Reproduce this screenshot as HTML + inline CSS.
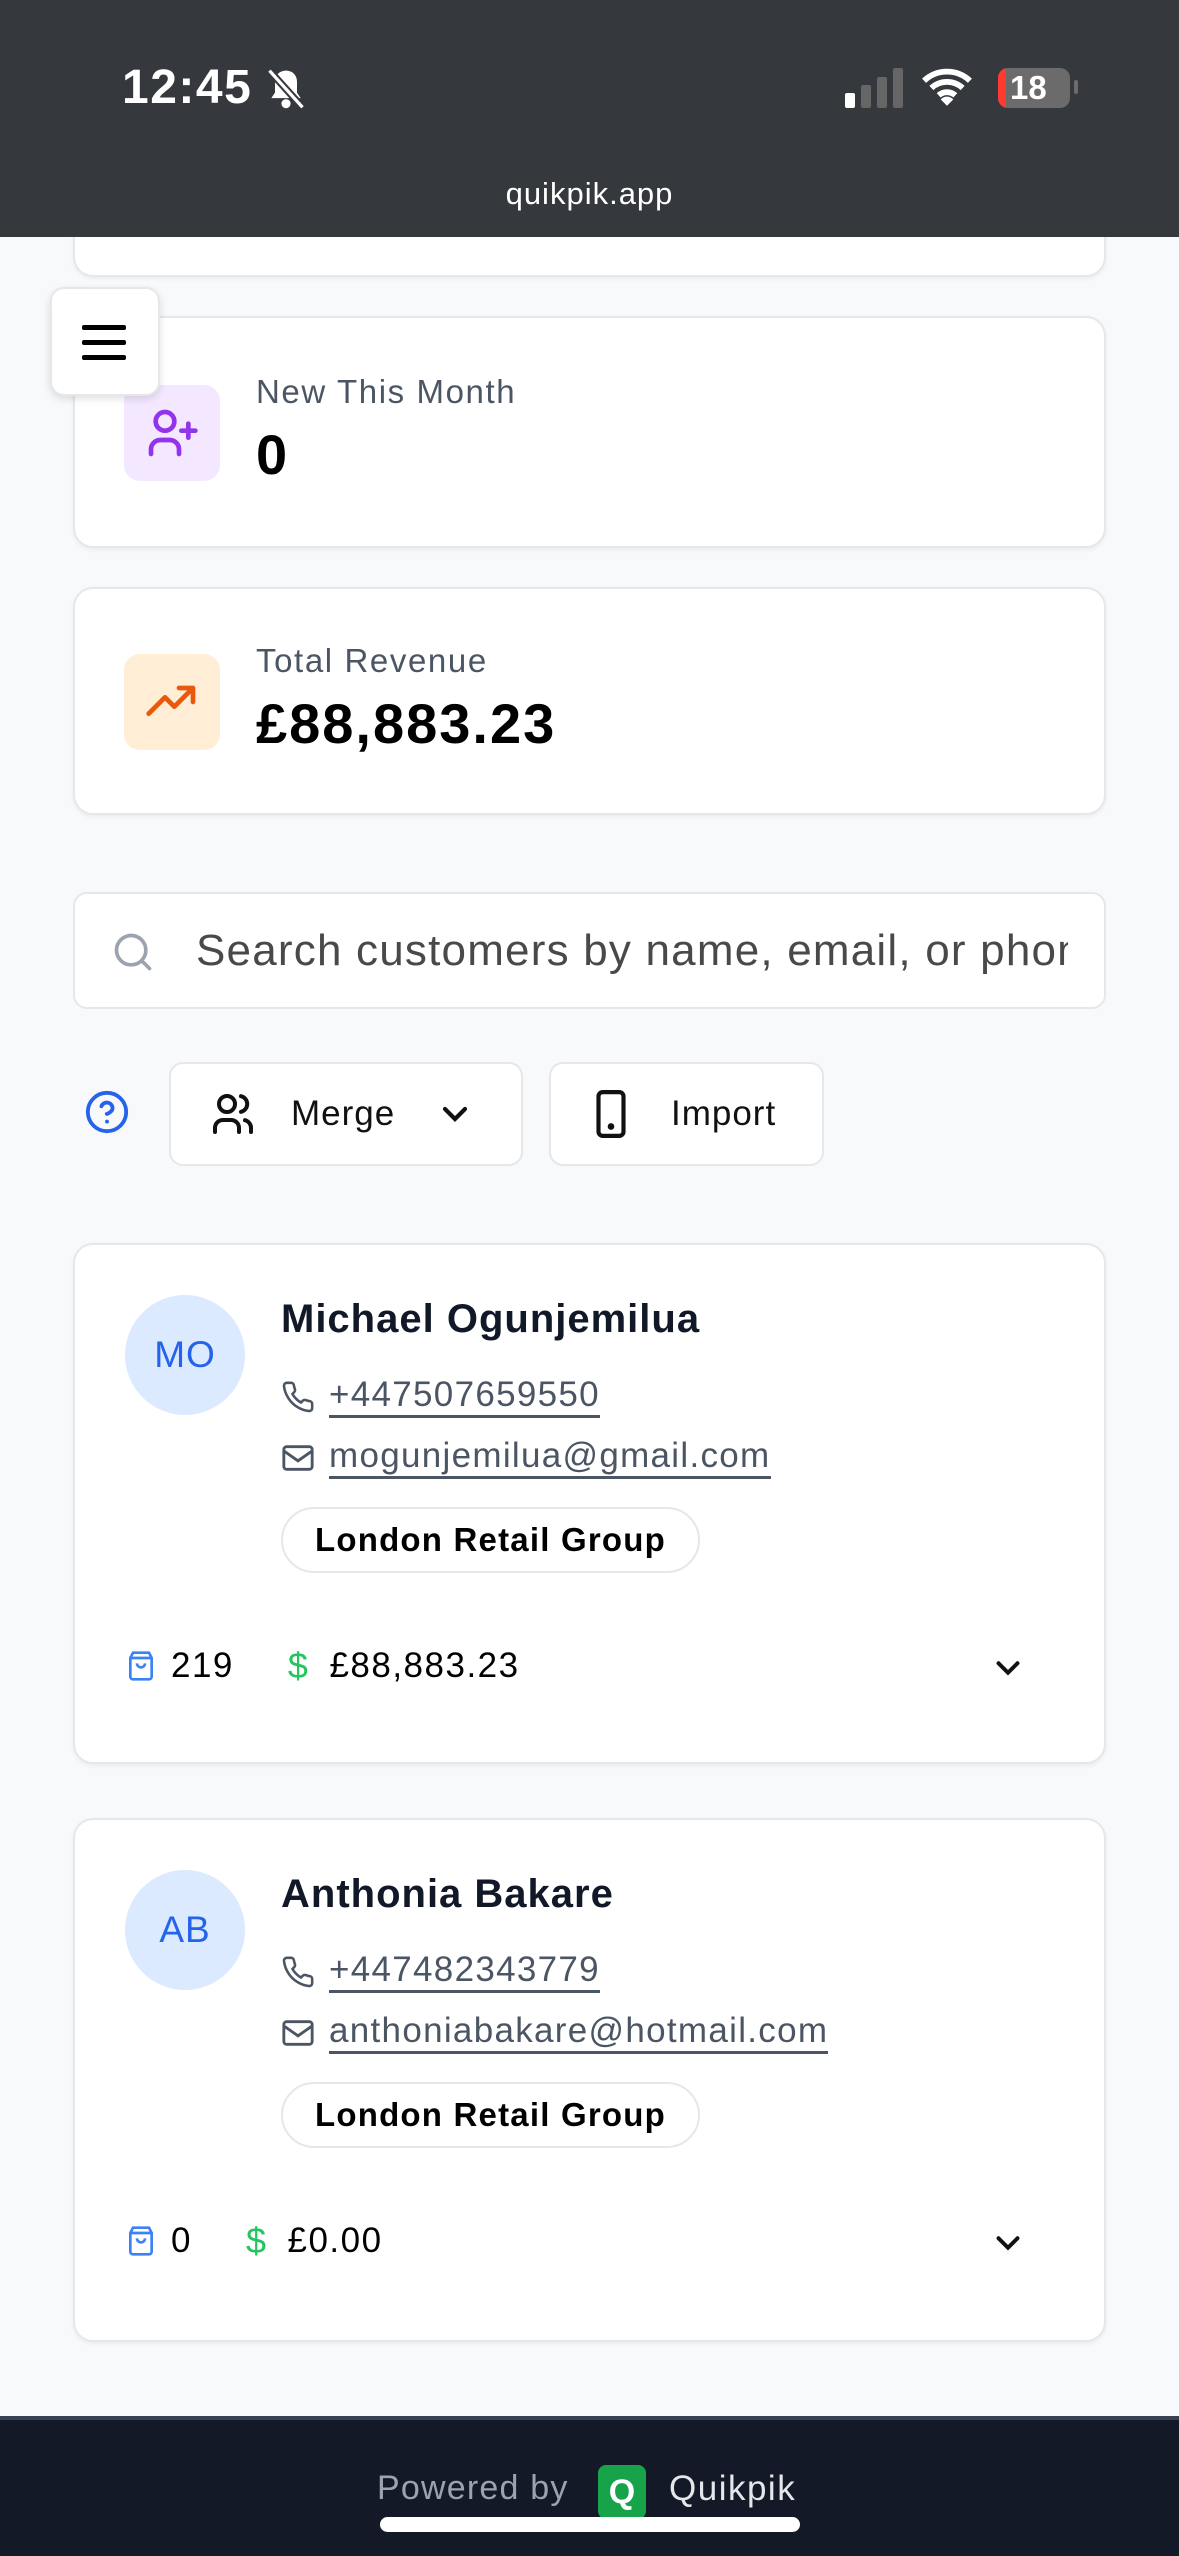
<!DOCTYPE html>
<html><head><meta charset="utf-8"><style>
*{box-sizing:border-box;margin:0;padding:0}
body{width:1179px;height:2556px;overflow:hidden;background:#f8f9fa;font-family:"Liberation Sans",sans-serif;position:relative;color:#111}
.abs{position:absolute}
.card{position:absolute;left:73px;width:1033px;background:#fff;border:2px solid #e5e7eb;border-radius:20px;box-shadow:0 2px 4px rgba(0,0,0,.05)}
.lbl{position:absolute;font-size:33px;color:#4b5563;letter-spacing:1.6px}
.val{position:absolute;font-size:56px;font-weight:bold;color:#000;letter-spacing:2px}
.ibox{position:absolute;width:96px;height:96px;border-radius:16px;display:flex;align-items:center;justify-content:center}
.btn{position:absolute;background:#fff;border:2px solid #e5e7eb;border-radius:14px;height:104px;top:1062px;display:flex;align-items:center;font-size:35px;color:#111;letter-spacing:1px}
.av{position:absolute;left:50px;top:50px;width:120px;height:120px;border-radius:50%;background:#dbeafe;color:#2563eb;font-size:37px;display:flex;align-items:center;justify-content:center;letter-spacing:1px}
.name{position:absolute;left:206px;top:52px;font-size:40px;font-weight:bold;color:#111827;letter-spacing:1px}
.ln{position:absolute;left:206px;font-size:35px;color:#4b5563;display:flex;align-items:center;letter-spacing:1.3px}
.ln span{border-bottom:3px solid #4b5563;margin-left:14px;line-height:40px}
.pill{position:absolute;left:206px;top:262px;height:66px;border:2px solid #e5e7eb;border-radius:33px;padding:0 32px;font-size:33px;font-weight:bold;display:flex;align-items:center;color:#000;letter-spacing:1.2px}
.stats{position:absolute;left:50px;top:400px;font-size:35px;display:flex;align-items:center;color:#000;letter-spacing:1.5px}
</style></head><body>

<div class="card" style="top:180px;height:97px;border-top:none;border-radius:0 0 20px 20px"></div>

<div class="abs" style="left:0;top:0;width:1179px;height:237px;background:#35383c"></div>
<div class="abs" style="left:122px;top:60px;font-size:48px;font-weight:bold;color:#fff;letter-spacing:1.5px">12:45</div>
<svg class="abs" style="left:264px;top:66px" width="44" height="46" viewBox="0 0 24 24" fill="#fff"><path d="M12 2c-3.5 0-6 2.5-6 6v6l-2 3h16l-2-3V8c0-3.5-2.5-6-6-6z"/><circle cx="12" cy="20" r="2.5"/><path d="M3 2l18 20" stroke="#35383c" stroke-width="4"/><path d="M3 2l18 20" stroke="#fff" stroke-width="1.8"/></svg>
<div class="abs" style="left:845px;top:93px;width:10px;height:15px;background:#fff;border-radius:2px"></div>
<div class="abs" style="left:861px;top:85px;width:10px;height:23px;background:#666;border-radius:2px"></div>
<div class="abs" style="left:877px;top:77px;width:10px;height:31px;background:#666;border-radius:2px"></div>
<div class="abs" style="left:893px;top:68px;width:10px;height:40px;background:#666;border-radius:2px"></div>
<svg class="abs" style="left:922px;top:66px" width="50" height="42" viewBox="0 0 24 20"><path d="M1 7a16 16 0 0 1 22 0M4.5 10.5a11 11 0 0 1 15 0M8 14a6 6 0 0 1 8 0" stroke="#fff" stroke-width="2.8" fill="none"/><path d="M12 19l-3-3a4 4 0 0 1 6 0z" fill="#fff"/></svg>
<div class="abs" style="left:998px;top:68px;width:72px;height:40px;border-radius:10px;background:#6b6b6b;overflow:hidden"><div style="width:8px;height:40px;background:#ff3b30"></div></div>
<div class="abs" style="left:1010px;top:68px;font-size:33px;font-weight:bold;color:#fff;line-height:40px">18</div>
<div class="abs" style="left:1074px;top:80px;width:4px;height:14px;background:#6b6b6b;border-radius:2px"></div>
<div class="abs" style="left:0;width:1179px;top:176px;text-align:center;font-size:31px;color:#fff;letter-spacing:1px">quikpik.app</div>

<div class="card" style="top:316px;height:232px">
 <div class="ibox" style="left:49px;top:67px;background:#f3e8ff"><svg width="56" height="56" viewBox="0 0 24 24" fill="none" stroke="#9333ea" stroke-width="2" stroke-linecap="round"><circle cx="9" cy="7" r="4"/><path d="M3 21v-2a4 4 0 0 1 4-4h4a4 4 0 0 1 4 4v2M19 8v6M16 11h6"/></svg></div>
 <div class="lbl" style="left:181px;top:55px">New This Month</div>
 <div class="val" style="left:181px;top:104px">0</div>
</div>
<div class="abs" style="left:50px;top:287px;width:110px;height:109px;background:#fff;border:2px solid #e5e7eb;border-radius:14px;box-shadow:0 3px 8px rgba(0,0,0,.12)">
 <div class="abs" style="left:30px;top:36px;width:44px;height:5px;background:#000;border-radius:2px"></div>
 <div class="abs" style="left:30px;top:51px;width:44px;height:5px;background:#000;border-radius:2px"></div>
 <div class="abs" style="left:30px;top:66px;width:44px;height:5px;background:#000;border-radius:2px"></div>
</div>

<div class="card" style="top:587px;height:228px">
 <div class="ibox" style="left:49px;top:65px;background:#ffedd5"><svg width="56" height="56" viewBox="0 0 24 24" fill="none" stroke="#ea580c" stroke-width="2" stroke-linecap="round" stroke-linejoin="round"><path d="M2 17l7-7 4 4 8-8M15 6h6v6"/></svg></div>
 <div class="lbl" style="left:181px;top:53px">Total Revenue</div>
 <div class="val" style="left:181px;top:102px">£88,883.23</div>
</div>

<div class="abs" style="left:73px;top:892px;width:1033px;height:117px;background:#fff;border:2px solid #e5e7eb;border-radius:14px;overflow:hidden">
 <svg class="abs" style="left:36px;top:36px" width="44" height="44" viewBox="0 0 24 24" fill="none" stroke="#9ca3af" stroke-width="2" stroke-linecap="round"><circle cx="11" cy="11" r="8"/><path d="M21 21l-4.3-4.3"/></svg>
 <div class="abs" style="left:121px;top:32px;width:872px;overflow:hidden;font-size:44px;color:#4b4848;white-space:nowrap;letter-spacing:1.2px">Search customers by name, email, or phone</div>
</div>

<svg class="abs" style="left:84px;top:1089px" width="46" height="46" viewBox="0 0 24 24" fill="none" stroke="#2563eb" stroke-width="2" stroke-linecap="round"><circle cx="12" cy="12" r="10"/><path d="M9.1 9a3 3 0 0 1 5.8 1c0 2-3 3-3 3M12 17h.01"/></svg>
<div class="btn" style="left:169px;width:354px">
 <svg style="margin-left:38px" width="48" height="48" viewBox="0 0 24 24" fill="none" stroke="#111" stroke-width="2" stroke-linecap="round"><circle cx="9" cy="7" r="4"/><path d="M3 21v-2a4 4 0 0 1 4-4h4a4 4 0 0 1 4 4v2M16 3.1a4 4 0 0 1 0 7.8M21 21v-2a4 4 0 0 0-3-3.9"/></svg>
 <span style="margin-left:34px">Merge</span>
 <svg style="margin-left:40px" width="40" height="40" viewBox="0 0 24 24" fill="none" stroke="#111" stroke-width="2.5" stroke-linecap="round"><path d="M6 9l6 6 6-6"/></svg>
</div>
<div class="btn" style="left:549px;width:275px">
 <svg style="margin-left:40px" width="40" height="50" viewBox="0 0 16 24" fill="none" stroke="#111" stroke-width="2"><rect x="2" y="1.5" width="12" height="21" rx="2"/><circle cx="8" cy="18" r=".6" fill="#111"/></svg>
 <span style="margin-left:40px">Import</span>
</div>

<div class="card" style="top:1243px;height:521px">
 <div class="av">MO</div>
 <div class="name">Michael Ogunjemilua</div>
 <div class="ln" style="top:130px"><svg width="34" height="34" viewBox="0 0 24 24" fill="none" stroke="#4b5563" stroke-width="1.8"><path d="M22 16.9v3a2 2 0 0 1-2.2 2 19.8 19.8 0 0 1-8.6-3.1 19.5 19.5 0 0 1-6-6A19.8 19.8 0 0 1 2.1 4.2 2 2 0 0 1 4.1 2h3a2 2 0 0 1 2 1.7c.1 1 .4 1.9.7 2.8a2 2 0 0 1-.5 2.1L8.1 9.9a16 16 0 0 0 6 6l1.3-1.3a2 2 0 0 1 2.1-.4c.9.3 1.8.6 2.8.7a2 2 0 0 1 1.7 2z"/></svg><span>+447507659550</span></div>
 <div class="ln" style="top:191px"><svg width="34" height="34" viewBox="0 0 24 24" fill="none" stroke="#4b5563" stroke-width="2"><rect x="2" y="4" width="20" height="16" rx="2"/><path d="M22 7l-10 7L2 7"/></svg><span>mogunjemilua@gmail.com</span></div>
 <div class="pill">London Retail Group</div>
 <div class="stats"><svg width="32" height="36" viewBox="0 0 24 24" fill="none" stroke="#3b82f6" stroke-width="2"><path d="M6 2h12l2 4v14a2 2 0 0 1-2 2H6a2 2 0 0 1-2-2V6z"/><path d="M4 6h16M9 10a3 3 0 0 0 6 0"/></svg><span style="margin-left:14px">219</span><span style="margin-left:54px;color:#22c55e;font-size:36px">$</span><span style="margin-left:20px">£88,883.23</span></div>
 <svg class="abs" style="left:914px;top:404px" width="38" height="38" viewBox="0 0 24 24" fill="none" stroke="#111" stroke-width="2.5" stroke-linecap="round"><path d="M6 9l6 6 6-6"/></svg>
</div>

<div class="card" style="top:1818px;height:524px">
 <div class="av">AB</div>
 <div class="name">Anthonia Bakare</div>
 <div class="ln" style="top:130px"><svg width="34" height="34" viewBox="0 0 24 24" fill="none" stroke="#4b5563" stroke-width="1.8"><path d="M22 16.9v3a2 2 0 0 1-2.2 2 19.8 19.8 0 0 1-8.6-3.1 19.5 19.5 0 0 1-6-6A19.8 19.8 0 0 1 2.1 4.2 2 2 0 0 1 4.1 2h3a2 2 0 0 1 2 1.7c.1 1 .4 1.9.7 2.8a2 2 0 0 1-.5 2.1L8.1 9.9a16 16 0 0 0 6 6l1.3-1.3a2 2 0 0 1 2.1-.4c.9.3 1.8.6 2.8.7a2 2 0 0 1 1.7 2z"/></svg><span>+447482343779</span></div>
 <div class="ln" style="top:191px"><svg width="34" height="34" viewBox="0 0 24 24" fill="none" stroke="#4b5563" stroke-width="2"><rect x="2" y="4" width="20" height="16" rx="2"/><path d="M22 7l-10 7L2 7"/></svg><span>anthoniabakare@hotmail.com</span></div>
 <div class="pill">London Retail Group</div>
 <div class="stats"><svg width="32" height="36" viewBox="0 0 24 24" fill="none" stroke="#3b82f6" stroke-width="2"><path d="M6 2h12l2 4v14a2 2 0 0 1-2 2H6a2 2 0 0 1-2-2V6z"/><path d="M4 6h16M9 10a3 3 0 0 0 6 0"/></svg><span style="margin-left:14px">0</span><span style="margin-left:54px;color:#22c55e;font-size:36px">$</span><span style="margin-left:20px">£0.00</span></div>
 <svg class="abs" style="left:914px;top:404px" width="38" height="38" viewBox="0 0 24 24" fill="none" stroke="#111" stroke-width="2.5" stroke-linecap="round"><path d="M6 9l6 6 6-6"/></svg>
</div>

<div class="abs" style="left:0;top:2416px;width:1179px;height:140px;background:#131927;border-top:4px solid #374151"></div>
<div class="abs" style="left:377px;top:2469px;font-size:34px;color:#9ca3af;letter-spacing:1.2px">Powered by</div>
<div class="abs" style="left:598px;top:2465px;width:48px;height:54px;background:#16a34a;border-radius:8px;color:#fff;font-weight:bold;font-size:34px;display:flex;align-items:center;justify-content:center">Q</div>
<div class="abs" style="left:669px;top:2469px;font-size:35px;color:#e5e7eb;letter-spacing:1.5px">Quikpik</div>
<div class="abs" style="left:380px;top:2517px;width:420px;height:15px;background:#fff;border-radius:8px"></div>
</body></html>
